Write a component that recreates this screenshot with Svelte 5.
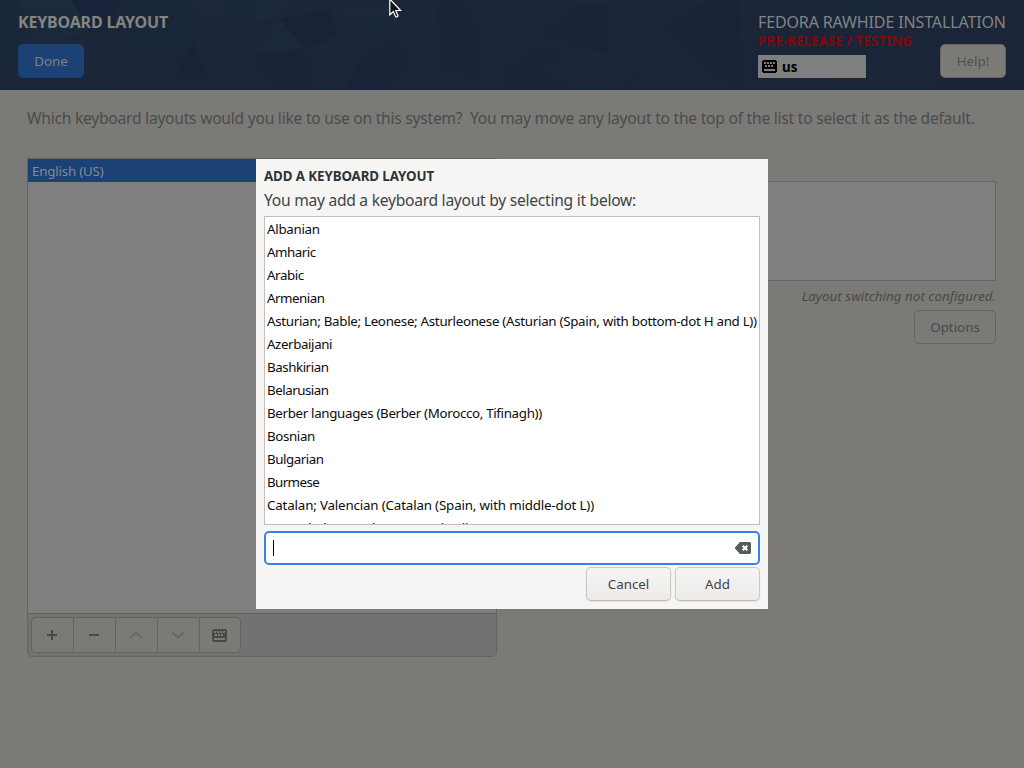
<script>
  // Each entry: layout name, letter spacing in px
  const layouts = [
    ['Albanian', -.28], ['Amharic', -.5], ['Arabic', -.4], ['Armenian', -.5],
    ['Asturian; Bable; Leonese; Asturleonese (Asturian (Spain, with bottom-dot H and L))', -.295],
    ['Azerbaijani', -.4], ['Bashkirian', -.45], ['Belarusian', -.48],
    ['Berber languages (Berber (Morocco, Tifinagh))', -.33],
    ['Bosnian', -.38], ['Bulgarian', -.45], ['Burmese', -.6],
    ['Catalan; Valencian (Catalan (Spain, with middle-dot L))', -.16],
    ['Central Khmer (Khmer (Cambodia))', -.08]
  ];
  const facets = [
    ['0,0 19,0 37,45 45,90 0,90', '#1b283a'], ['19,0 72,0 90,33 60,38 37,45', '#1d2e3d'],
    ['72,0 120,0 105,33 90,33', '#192238'], ['60,38 105,33 120,50 118,90 45,90 37,45', '#1c293b'],
    ['120,0 193,0 193,42 146,52 120,50', '#1b283b'], ['146,52 193,42 177,73 150,90 138,88', '#1d2739'],
    ['193,0 230,0 222,26 193,42', '#1c2a3a'],
    ['193,42 207,74 177,73', '#182135'],
    ['193,42 222,26 250,22 251,54 207,74', '#1c293b'],
    ['230,0 258,0 250,22 222,26', '#1b283b'],
    ['258,0 290,0 280,20 250,22', '#1d2c3c'], ['280,20 307,49 251,54', '#1d2c3c'],
    ['280,20 329,9 337,36 307,49', '#182135'], ['251,54 307,49 313,90 275,90', '#1a2437'],
    ['307,49 357,66 347,90 313,90', '#1d2a3a'], ['307,49 337,36 366,30 357,66', '#1b283a'],
    ['329,9 400,0 395,40 366,30', '#1b293a'],
    ['395,40 408,60 386,90 347,90 357,66', '#192338'], ['400,10 433,3 451,32 424,50 447,70 437,90', '#1c2839'],
    ['433,3 460,0 481,39 476,75 447,70', '#1a2338'],
    ['460,0 505,0 511,27 481,39', '#1b2739'], ['481,39 511,27 511,65 476,75', '#1c2839'],
    ['511,27 543,31 511,65', '#1e2939'],
    ['511,65 543,31 577,45 541,71 571,90 509,90', '#1a2437'],
    ['543,31 581,3 610,5 606,53 577,45', '#192338'], ['577,45 606,53 640,70 620,90 571,90', '#1c2a3b'],
    ['581,3 685,0 665,28 680,60 606,53 610,5', '#1b2839'],
    ['665,28 706,0 738,0 745,90 716,75', '#192338'],
    ['830,0 890,0 910,60 860,25', '#1b283c'], ['855,56 930,90 820,90', '#1c2a3b'],
    ['890,0 1024,0 1024,45 940,50', '#1b2739'], ['930,90 970,60 1024,90', '#192237']
  ];
</script>

{#snippet keyboard()}
  <svg class="kb" width="15" height="13" viewBox="0 0 15 13" shape-rendering="crispEdges">
    <path fill="currentColor" fill-rule="evenodd" d="M1 0h13v1h1v11h-1v1H1v-1H0V1h1zM2 2v2h2V2zM5 2v2h2V2zM8 2v2h2V2zM11 2v2h2V2zM3 5v2h2V5zM6 5v2h2V5zM9 5v2h2V5zM2 9v2h11V9z" />
  </svg>
{/snippet}

<div class="screen">
  <header>
    <svg class="facets" width="1024" height="90" viewBox="0 0 1024 90" aria-hidden="true">
      <defs>
        <linearGradient id="shade" x1="0" y1="0" x2="0" y2="1">
          <stop offset="0" stop-color="#192038" stop-opacity="0" />
          <stop offset="1" stop-color="#192038" stop-opacity=".3" />
        </linearGradient>
      </defs>
      {#each facets as [points, fill]}<polygon {points} {fill} opacity=".6" />{/each}
      <rect width="1024" height="90" fill="url(#shade)" />
    </svg>
    <div class="head-left">
      <h1>KEYBOARD LAYOUT</h1>
      <button class="done">Done</button>
    </div>
    <div class="head-right">
      <div class="product">FEDORA RAWHIDE INSTALLATION</div>
      <div class="head-row">
        <div>
          <div class="pre">PRE-RELEASE / TESTING</div>
          <div class="indicator">{@render keyboard()}<b>us</b></div>
        </div>
        <button class="help">Help!</button>
      </div>
    </div>
  </header>

  <main>
    <p class="question">Which keyboard layouts would you like to use on this system?&nbsp; You may move any layout to the top of the list to select it as the default.</p>
    <div class="columns">
      <section class="chosen">
        <div class="chosen-list"><div class="selected">English (US)</div></div>
        <div class="toolbar">
          <div class="linked">
            <button aria-label="Add"><svg width="16" height="16"><path d="M3 8h10M8 3v10" stroke="currentColor" stroke-width="2" /></svg></button>
            <button aria-label="Remove"><svg width="16" height="16"><path d="M3 8h10" stroke="currentColor" stroke-width="2" /></svg></button>
            <button class="off" aria-label="Up"><svg width="16" height="16"><path d="M3 10.5l5-5 5 5" fill="none" stroke="currentColor" stroke-width="2" stroke-linecap="round" /></svg></button>
            <button class="off" aria-label="Down"><svg width="16" height="16"><path d="M3 5.8l5 5 5-5" fill="none" stroke="currentColor" stroke-width="2" stroke-linecap="round" /></svg></button>
            <button aria-label="Preview">{@render keyboard()}</button>
          </div>
        </div>
      </section>
      <section class="test">
        <div class="test-box"></div>
        <div class="switching">Layout switching not configured.</div>
        <button class="options">Options</button>
      </section>
    </div>
  </main>

  <div class="dialog">
    <h2>ADD A KEYBOARD LAYOUT</h2>
    <p>You may add a keyboard layout by selecting it below:</p>
    <div class="list">
      {#each layouts as [name, spacing]}<div class="row" style="letter-spacing: {spacing}px">{name}</div>{/each}
    </div>
    <div class="entry">
      <span class="caret"></span>
      <svg width="16" height="12" viewBox="0 0 16 12"><path fill="#555c5c" d="M5 0h10l1 1v10l-1 1H5L0 6.5v-1z" /><path d="M7.7 3.7l4.6 4.6M12.3 3.7l-4.6 4.6" stroke="#fff" stroke-width="2" /></svg>
    </div>
    <div class="actions"><button>Cancel</button><button>Add</button></div>
  </div>

  <svg class="pointer" width="14" height="20" viewBox="0 0 14 20">
    <path d="M.8-1V14.8l3.5-3.3 2.3 5.2q1.4 .8 2.4-.7L6.8 10.5h4.8z" fill="#111" stroke="#fff" stroke-width="1.2" />
  </svg>
</div>

<style>
  :global(body) { margin: 0; overflow: hidden; }
  .screen { position: relative; width: 1024px; height: 768px; overflow: hidden; background: #7b7a77; font: 13.33px/18px "Noto Sans", sans-serif; color: #464a4a; }
  h1, h2, p { margin: 0; }
  svg { display: block; flex: none; }
  button { font: inherit; box-sizing: border-box; height: 34px; padding: 0; border: 1px solid #666461; border-radius: 5px; background: none; color: inherit; display: flex; align-items: center; justify-content: center; white-space: nowrap; }

  header { position: relative; box-sizing: border-box; height: 90px; padding: 12px 18px; display: flex; justify-content: space-between; background: #1b2638; color: #848484; }
  .facets { position: absolute; inset: 0; }
  .head-left, .head-right { position: relative; }
  h1 { font-size: 16px; line-height: 20px; letter-spacing: -.18px; white-space: nowrap; }
  .done { width: 66px; margin-top: 12px; background: #1b4175; border-color: #1b4175; color: #7d8287; }
  .head-right { width: 248px; }
  .product { font-size: 16px; line-height: 20px; letter-spacing: -.13px; white-space: nowrap; }
  .head-row { display: flex; justify-content: space-between; align-items: flex-end; height: 46px; }
  .pre { color: #7f080d; font-weight: 700; letter-spacing: .08px; white-space: nowrap; line-height: 18px; margin-bottom: 5px; }
  .indicator { box-sizing: border-box; width: 108px; height: 23px; padding-left: 4px; display: flex; align-items: center; gap: 5px; background: #7f7f7f; color: #000; }
  .indicator b { padding-top: 1px; }
  .help { width: 66px; background: #7b7a77; border-color: #666461; color: #4f5252; }

  main { padding: 17px 28px 0 27px; }
  .question { font-size: 15.6px; letter-spacing: -.237px; line-height: 22px; white-space: nowrap; color: #4a4c4c; }
  .columns { display: flex; justify-content: space-between; margin-top: 29px; }
  .chosen { box-sizing: border-box; width: 470px; height: 499px; border: 1px solid #666461; border-radius: 0 0 5px 5px; display: flex; flex-direction: column; overflow: hidden; }
  .chosen-list { flex: 1; background: #7f7f7f; }
  .selected { height: 23px; line-height: 24px; padding-left: 4px; letter-spacing: -.2px; background: #1b4175; color: #848b93; }
  .toolbar { box-sizing: border-box; height: 43px; padding: 3px; border-top: 1px solid #666461; background: #747270; }
  .linked { box-sizing: border-box; width: 210px; height: 36px; border: 1px solid #666461; border-radius: 5px; display: flex; background: #7b7a77; }
  .linked button { flex: 0 0 42px; padding-right: 1px; border: 0; border-radius: 0; color: #464a4a; }
  .linked button:first-child, .linked button:last-child { flex-basis: 41px; }
  .linked button + button { border-left: 1px solid #666461; padding-right: 2px; }
  .linked .off { color: #686967; }
  .test { width: 469px; padding-top: 23px; display: flex; flex-direction: column; align-items: flex-end; }
  .test-box { box-sizing: border-box; width: 100%; height: 100px; background: #7f7f7f; border: 1px solid #666461; }
  .switching { font-style: italic; letter-spacing: .04px; line-height: 20px; margin: 5px 0 4px; white-space: nowrap; }
  .options { width: 82px; }

  .dialog { position: absolute; left: 256px; top: 159px; box-sizing: border-box; width: 512px; height: 450px; padding: 8px; background: #f6f5f4; color: #2e3436; }
  h2 { font-size: 13.33px; line-height: 18px; letter-spacing: -.1px; white-space: nowrap; }
  .dialog p { box-sizing: border-box; height: 31px; padding-top: 4px; font-size: 15.6px; letter-spacing: -.26px; line-height: 22px; color: #3e4446; white-space: nowrap; }
  .list { box-sizing: border-box; height: 309px; border: 1px solid #c3c0bc; background: #fff; color: #0c0c0c; overflow: hidden; padding: 1px 0 0 2px; }
  .row { height: 23px; line-height: 23px; white-space: nowrap; }
  .entry { box-sizing: border-box; height: 34px; margin-top: 6px; padding: 0 7px; border: 2px solid #3584e4; border-radius: 5px; background: #fff; display: flex; align-items: center; justify-content: space-between; }
  .caret { width: 1px; height: 16px; background: #000; }
  .actions { display: flex; justify-content: flex-end; gap: 4px; margin-top: 2px; }
  .actions button { width: 85px; border-color: #cdc7c2; border-bottom-color: #bfb8b1; background: linear-gradient(#f6f5f4, #edebe9); color: #3e4446; box-shadow: 0 1px 2px rgba(0, 0, 0, .07); }
  .pointer { position: absolute; left: 389px; top: 0; }
</style>
